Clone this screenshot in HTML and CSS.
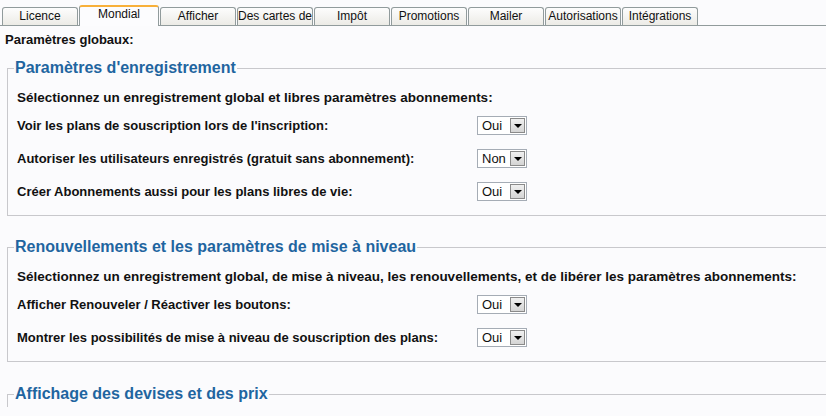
FILE: index.html
```html
<!DOCTYPE html>
<html lang="fr">
<head>
	<meta charset="UTF-8" />
	<title>Paramètres globaux</title>
	<link rel="stylesheet" href="styles.css">
</head>
<body>
	<div class="tabs">
		<span class="tab">Licence</span>
		<span class="tab active">Mondial</span>
		<span class="tab">Afficher</span>
		<span class="tab">Des cartes de</span>
		<span class="tab">Impôt</span>
		<span class="tab">Promotions</span>
		<span class="tab">Mailer</span>
		<span class="tab">Autorisations</span>
		<span class="tab">Intégrations</span>
	</div>

	<h3 class="page-title">Paramètres globaux:</h3>

	<fieldset class="group">
		<legend>Paramètres d'enregistrement</legend>
		<p class="intro">Sélectionnez un enregistrement global et libres paramètres abonnements:</p>
		<div class="row">
			<label>Voir les plans de souscription lors de l'inscription:</label>
			<span class="select"><span class="val">Oui</span><span class="arrow"></span></span>
		</div>
		<div class="row">
			<label>Autoriser les utilisateurs enregistrés (gratuit sans abonnement):</label>
			<span class="select"><span class="val">Non</span><span class="arrow"></span></span>
		</div>
		<div class="row">
			<label>Créer Abonnements aussi pour les plans libres de vie:</label>
			<span class="select"><span class="val">Oui</span><span class="arrow"></span></span>
		</div>
	</fieldset>

	<fieldset class="group">
		<legend>Renouvellements et les paramètres de mise à niveau</legend>
		<p class="intro">Sélectionnez un enregistrement global, de mise à niveau, les renouvellements, et de libérer les paramètres abonnements:</p>
		<div class="row">
			<label>Afficher Renouveler / Réactiver les boutons:</label>
			<span class="select"><span class="val">Oui</span><span class="arrow"></span></span>
		</div>
		<div class="row">
			<label>Montrer les possibilités de mise à niveau de souscription des plans:</label>
			<span class="select"><span class="val">Oui</span><span class="arrow"></span></span>
		</div>
	</fieldset>

	<fieldset class="group last">
		<legend>Affichage des devises et des prix</legend>
	</fieldset>
</body>
</html>
```
FILE: styles.css
```css
* {
	box-sizing: border-box;
}

html,
body {
	margin: 0;
	padding: 0;
	background: #fbfbfd;
	font-family: 'Liberation Sans', Arial, sans-serif;
	color: #111;
	overflow: hidden;
}

.tabs {
	display: flex;
	align-items: flex-end;
	height: 26px;
	padding-left: 2px;
	border-bottom: 1px solid #919b9c;
}

.tab {
	width: 76px;
	height: 18px;
	margin-right: 1px;
	border: 1px solid #919b9c;
	border-bottom: none;
	border-radius: 3px 3px 0 0;
	background: linear-gradient(#fdfdfd, #ecebe6);
	font-size: 12px;
	line-height: 17px;
	text-align: center;
	white-space: nowrap;
	overflow: hidden;
	color: #111;
}

.tab.active {
	width: 80px;
	height: 21px;
	margin-bottom: -1px;
	border-top: 2px solid #f8b03a;
	background: #fcfcfe;
	line-height: 15px;
}

.page-title {
	margin: 6px 0 0 5px;
	font-size: 13px;
	font-weight: bold;
}

.group {
	margin: 12px 0 0 7px;
	margin-right: -20px;
	padding: 4px 10px 7px 9px;
	border: 1px solid #c8c8cc;
	border-right: none;
}

.group + .group {
	margin-top: 22px;
}

.group.last {
	margin-top: 23px;
	height: 18px;
	padding-bottom: 0;
	border-bottom: none;
}

.group legend {
	padding: 0 1px;
	margin-left: -3px;
	font-size: 16px;
	font-weight: bold;
	color: #1f65a0;
}

.intro {
	margin: 9px 0 4px;
	font-size: 13.5px;
	font-weight: bold;
}

.row {
	display: flex;
	align-items: center;
	height: 33px;
	font-size: 13px;
	font-weight: bold;
}

.row label {
	width: 460px;
}

.select {
	display: flex;
	align-items: center;
	width: 50px;
	height: 19px;
	border: 1px solid #a5acb5;
	background: #fff;
	font-weight: normal;
	font-size: 13px;
}

.select .val {
	flex: 1;
	padding-left: 4px;
}

.select .arrow {
	position: relative;
	width: 15px;
	height: 15px;
	margin-right: 1px;
	border: 1px solid #8a8a8a;
	background: linear-gradient(#f0f0f0, #d4d4d4);
}

.select .arrow::after {
	content: '';
	position: absolute;
	left: 3px;
	top: 5px;
	border-left: 4px solid transparent;
	border-right: 4px solid transparent;
	border-top: 4px solid #000;
}
```
